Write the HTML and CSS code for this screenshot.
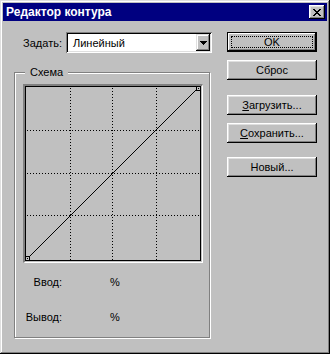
FILE: index.html
```html
<!DOCTYPE html>
<html lang="ru">

<head>
    <meta charset="UTF-8">
    <title>Редактор контура</title>
    <link rel="stylesheet" href="styles.css">
</head>

<body>
    <div class="window">
        <div class="titlebar">
            <span class="title">Редактор контура</span>
            <button class="close">
                <svg width="8" height="7" viewBox="0 0 8 7" shape-rendering="crispEdges">
                    <path d="M0 0h2v1H0z M6 0h2v1H6z M1 1h2v1H1z M5 1h2v1H5z M2 2h4v1H2z M3 3h2v1H3z M2 4h4v1H2z M1 5h2v1H1z M5 5h2v1H5z M0 6h2v1H0z M6 6h2v1H6z" fill="#000" />
                </svg>
            </button>
        </div>
        <div class="main">
            <div class="left">
                <div class="preset">
                    <label class="preset-label">Задать:</label>
                    <div class="combo">
                        <span class="combo-value">Линейный</span>
                        <span class="combo-arrow">
                            <svg width="7" height="4" viewBox="0 0 7 4" shape-rendering="crispEdges">
                                <path d="M0 0h7v1H0z M1 1h5v1H1z M2 2h3v1H2z M3 3h1v1H3z" fill="#000" />
                            </svg>
                        </span>
                    </div>
                </div>
                <div class="group">
                    <span class="group-caption">Схема</span>
                    <div class="graph">
                        <svg width="176" height="175" viewBox="0 0 176 175" shape-rendering="crispEdges">
                            <g stroke="#000" stroke-width="1" stroke-dasharray="1 2" fill="none">
                                <!-- сетка -->
                                <line x1="45.5" y1="2" x2="45.5" y2="174" />
                                <line x1="87.5" y1="2" x2="87.5" y2="174" />
                                <line x1="131.5" y1="2" x2="131.5" y2="174" />
                                <line x1="2" y1="44.5" x2="175" y2="44.5" />
                                <line x1="2" y1="87.5" x2="175" y2="87.5" />
                                <line x1="2" y1="129.5" x2="175" y2="129.5" />
                            </g>
                            <rect x="0.5" y="0.5" width="175" height="174" fill="none" stroke="#000" />
                            <line x1="2.5" y1="172.5" x2="173.5" y2="1.5" stroke="#000" />
                            <!-- точки кривой -->
                            <rect x="0.5" y="170.5" width="4" height="4" fill="#c0c0c0" stroke="#000" />
                            <rect x="2" y="172" width="1" height="1" fill="#000" />
                            <rect x="171.5" y="0.5" width="4" height="4" fill="#c0c0c0" stroke="#000" />
                            <rect x="173" y="2" width="1" height="1" fill="#000" />
                        </svg>
                    </div>
                    <div class="readout">
                        <span class="readout-label">Ввод:</span>
                        <span class="readout-value">%</span>
                        <span class="readout-label">Вывод:</span>
                        <span class="readout-value">%</span>
                    </div>
                </div>
            </div>
            <div class="buttons">
                <button class="btn btn-default"><span class="focus">OK</span></button>
                <button class="btn">Сброс</button>
                <button class="btn btn-gap"><u>З</u>агрузить...</button>
                <button class="btn"><u>С</u>охранить...</button>
                <button class="btn btn-gap-small">Новый...</button>
            </div>
        </div>
    </div>
</body>

</html>
```

FILE: styles.css
```css
body {
    margin: 0;
    font-family: "Liberation Sans", Arial, sans-serif;
    font-size: 11px;
    color: #000;
}

.window {
    width: 330px;
    height: 354px;
    box-sizing: border-box;
    padding: 3px;
    background: #c0c0c0;
    box-shadow: inset -1px -1px #000, inset 1px 1px #dfdfdf, inset -2px -2px #808080, inset 2px 2px #fff;
}

.titlebar {
    height: 18px;
    background: #000080;
    display: flex;
    align-items: center;
    justify-content: space-between;
    padding: 0 2px 0 3px;
}

.title {
    color: #fff;
    font-weight: bold;
    font-size: 12px;
}

.close {
    width: 16px;
    height: 14px;
    padding: 0;
    border: 0;
    background: #c0c0c0;
    display: flex;
    align-items: center;
    justify-content: center;
    box-shadow: inset -1px -1px #000, inset 1px 1px #fff, inset -2px -2px #808080, inset 2px 2px #dfdfdf;
}

.main {
    display: flex;
    padding: 11px 0 0 11px;
}

.left {
    width: 198px;
}

.preset {
    display: flex;
    align-items: center;
    height: 21px;
}

.preset-label {
    width: 48px;
    margin-right: 4px;
    text-align: right;
}

.combo {
    width: 146px;
    height: 21px;
    box-sizing: border-box;
    padding: 2px;
    display: flex;
    align-items: center;
    background: #fff;
    box-shadow: inset 1px 1px #808080, inset -1px -1px #fff, inset 2px 2px #000, inset -2px -2px #dfdfdf;
}

.combo-value {
    padding-left: 5px;
}

.combo-arrow {
    margin-left: auto;
    width: 14px;
    align-self: stretch;
    display: flex;
    align-items: center;
    justify-content: center;
    background: #c0c0c0;
    box-shadow: inset -1px -1px #000, inset 1px 1px #dfdfdf, inset -2px -2px #808080, inset 2px 2px #fff;
}

.group {
    width: 196px;
    height: 266px;
    box-sizing: border-box;
    margin-top: 19px;
    border: 1px solid #808080;
    box-shadow: 1px 1px 0 #fff, inset 1px 1px 0 #fff;
    display: flex;
    flex-direction: column;
    align-items: flex-start;
}

.group-caption {
    margin: -7px 0 0 10px;
    padding: 0 5px;
    line-height: 13px;
    background: #c0c0c0;
}

.graph {
    margin: 5px 0 0 8px;
    border-style: solid;
    border-width: 2px 1px 1px 2px;
    border-color: #808080 #fff #fff #808080;
    padding: 0 1px 1px 0;
    line-height: 0;
}

.readout {
    display: grid;
    grid-template-columns: 47px auto;
    column-gap: 48px;
    row-gap: 22px;
    margin-top: 13px;
    line-height: 13px;
}

.readout-label {
    text-align: right;
}

.buttons {
    margin-left: 15px;
    display: flex;
    flex-direction: column;
    gap: 8px;
}

.btn {
    width: 90px;
    height: 20px;
    padding: 0;
    border: 0;
    background: #c0c0c0;
    font-family: "Liberation Sans", Arial, sans-serif;
    font-size: 11px;
    color: #000;
    box-shadow: inset -1px -1px #000, inset 1px 1px #fff, inset -2px -2px #808080, inset 2px 2px #dfdfdf;
}

.btn-default {
    display: flex;
    padding: 4px;
    box-shadow: inset 0 0 0 1px #000, inset -2px -2px #000, inset 2px 2px #fff, inset -3px -3px #808080;
}

.focus {
    flex: 1;
    display: flex;
    align-items: center;
    justify-content: center;
    border: 1px dotted #000;
}

.btn-gap {
    margin-top: 7px;
}

.btn-gap-small {
    margin-top: 6px;
}
```
